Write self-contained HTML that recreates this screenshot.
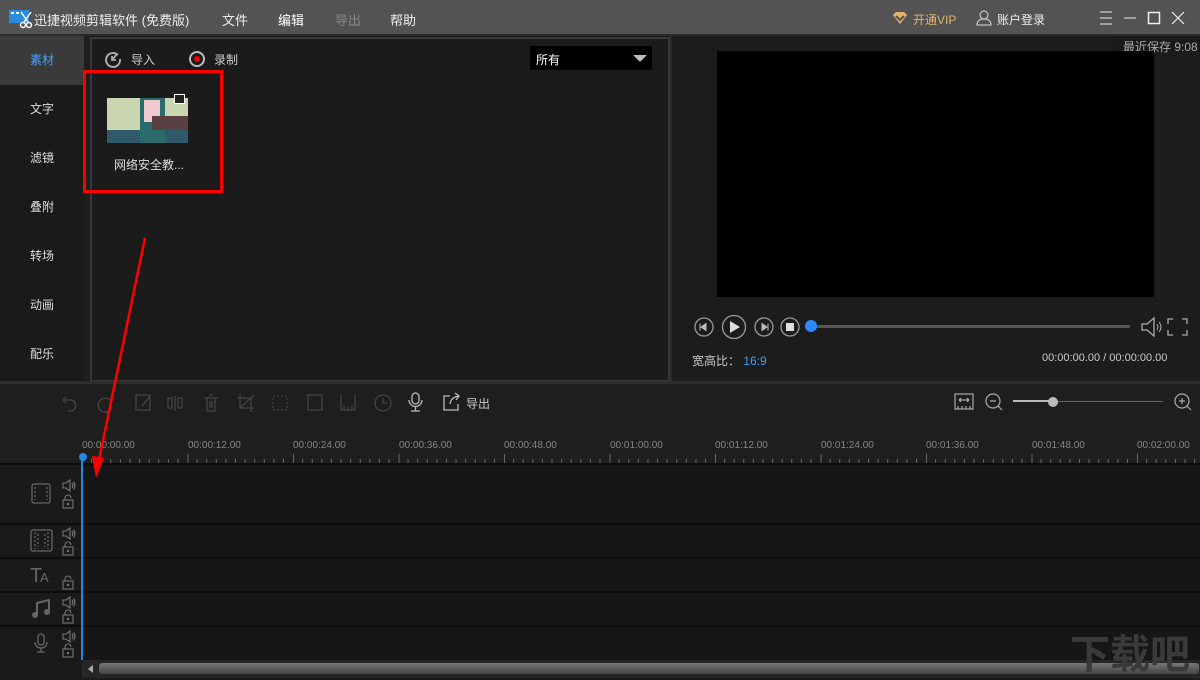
<!DOCTYPE html>
<html><head><meta charset="utf-8"><style>
*{margin:0;padding:0;box-sizing:border-box}
body{width:1200px;height:680px;overflow:hidden;background:#1a1a1a;font-family:"Liberation Sans","Noto Sans CJK SC",sans-serif;font-size:12px;color:#ccc;position:relative}
.a{position:absolute}
.side div{position:absolute;left:0;width:84px;height:49px;line-height:49px;text-align:center;color:#ddd;font-size:12px}
.tick{position:absolute;top:440px;font-size:10px;color:#888}
.row{position:absolute;left:0;width:1200px;border-top:2px solid #0c0c0c;background:#161616}
</style></head><body>
<div class="a" style="left:0;top:0;width:1200px;height:34px;background:#535353"></div>
<div class="a" style="left:0;top:34px;width:1200px;height:2px;background:#2a2a2a"></div>
<svg class="a" style="left:8px;top:9px" width="26" height="20"><rect x="1" y="1" width="20" height="13" fill="#2a8ae0"/><rect x="3" y="3" width="3" height="2" fill="#fff"/><rect x="8" y="3" width="3" height="2" fill="#fff"/><circle cx="15" cy="16" r="2.5" fill="none" stroke="#fff" stroke-width="1.5"/><circle cx="21" cy="16" r="2.5" fill="none" stroke="#fff" stroke-width="1.5"/><path d="M13 3 L20 13 M23 3 L16 13" stroke="#fff" stroke-width="1.5"/></svg>
<div class="a" style="left:34px;top:10px;color:#eee;font-size:13px">迅捷视频剪辑软件 (免费版)</div>
<div class="a" style="left:222px;top:10px;color:#eee;font-size:13px">文件</div>
<div class="a" style="left:278px;top:10px;color:#fff;font-size:13px">编辑</div>
<div class="a" style="left:335px;top:10px;color:#888;font-size:13px">导出</div>
<div class="a" style="left:390px;top:10px;color:#eee;font-size:13px">帮助</div>
<svg class="a" style="left:891px;top:11px" width="18" height="14"><path d="M2 4 L5 1 H13 L16 4 L9 13Z" fill="#e4b36a"/><path d="M5 5 L9 9 L13 5" stroke="#535353" stroke-width="2" fill="none"/></svg>
<div class="a" style="left:913px;top:11px;color:#e4b36a;font-size:12px">开通VIP</div>
<svg class="a" style="left:976px;top:10px" width="16" height="16"><circle cx="8" cy="5" r="4" fill="none" stroke="#ddd"/><path d="M1 15 Q1 9 8 9 Q15 9 15 15Z" fill="none" stroke="#ddd"/></svg>
<div class="a" style="left:997px;top:11px;color:#eee;font-size:12px">账户登录</div>
<svg class="a" style="left:1098px;top:10px" width="100" height="16"><path d="M2 2H14M2 8H14M2 14H14" stroke="#eee"/><path d="M26 8H38" stroke="#eee"/><rect x="50.5" y="2.5" width="11" height="11" fill="none" stroke="#eee" stroke-width="1.5"/><path d="M74 2L86 14M86 2L74 14" stroke="#eee" stroke-width="1.2"/></svg>
<div class="side">
<div style="top:36px;background:#3a3a3a;color:#4aa3ff">素材</div>
<div style="top:85px">文字</div><div style="top:134px">滤镜</div><div style="top:183px">叠附</div><div style="top:232px">转场</div><div style="top:281px">动画</div><div style="top:330px">配乐</div>
</div>
<div class="a" style="left:84px;top:36px;width:6px;height:346px;background:#1e1e1e"></div>
<div class="a" style="left:90px;top:37px;width:580px;height:345px;border:2px solid #383838;background:#1b1b1b"></div>
<svg class="a" style="left:104px;top:50px" width="18" height="18"><path d="M14 5 A7 7 0 1 0 16 9" fill="none" stroke="#aaa" stroke-width="2"/><path d="M13 4 L8 10 M8 6 V10 H12" stroke="#aaa" stroke-width="1.8" fill="none"/></svg>
<div class="a" style="left:131px;top:51px;color:#ccc">导入</div>
<div class="a" style="left:189px;top:51px;width:16px;height:16px;border-radius:50%;border:2px solid #bbb"></div>
<div class="a" style="left:194px;top:56px;width:6px;height:6px;border-radius:50%;background:#e00"></div>
<div class="a" style="left:214px;top:51px;color:#ccc">录制</div>
<div class="a" style="left:530px;top:46px;width:122px;height:24px;background:#000;color:#fff;padding:5px 6px">所有</div>
<div class="a" style="left:633px;top:55px;border-left:7px solid transparent;border-right:7px solid transparent;border-top:7px solid #bbb"></div>
<div class="a" style="left:107px;top:98px;width:81px;height:45px;background:#c9d6b0"></div>
<div class="a" style="left:107px;top:130px;width:81px;height:13px;background:#2f5a6a"></div>
<div class="a" style="left:140px;top:98px;width:25px;height:45px;background:#2a6b6b"></div>
<div class="a" style="left:144px;top:100px;width:16px;height:22px;background:#f0c8d0"></div>
<div class="a" style="left:152px;top:116px;width:36px;height:14px;background:#5a4040"></div>
<div class="a" style="left:174px;top:94px;width:11px;height:10px;border:1px solid #fff;background:#222"></div>
<div class="a" style="left:114px;top:156px;color:#ddd">网络安全教...</div>
<div class="a" style="left:83px;top:70px;width:140px;height:123px;border:3px solid #f00"></div>
<div class="a" style="left:670px;top:36px;width:2px;height:346px;background:#2a2a2a"></div>
<div class="a" style="left:672px;top:36px;width:528px;height:346px;background:#1c1c1c"></div>
<div class="a" style="left:1112px;top:36px;width:88px;height:16px;background:#1a1a1a"></div>
<div class="a" style="left:1123px;top:38px;color:#aaa;font-size:12px">最近保存 9:08</div>
<div class="a" style="left:717px;top:51px;width:437px;height:246px;background:#000"></div>
<svg class="a" style="left:692px;top:314px" width="130" height="26"><g fill="none" stroke="#999" stroke-width="1.3"><circle cx="12" cy="13" r="9"/><circle cx="42" cy="13" r="11.5"/><circle cx="72" cy="13" r="9"/><circle cx="98" cy="13" r="9"/></g><path d="M9 13L14 9.5V16.5Z M8 9.5V16.5" fill="#bbb" stroke="#bbb"/><path d="M38 7L48 13L38 19Z" fill="#ddd"/><path d="M75 13L70 9.5V16.5Z M76 9.5V16.5" fill="#bbb" stroke="#bbb"/><rect x="94" y="9" width="8" height="8" fill="#ddd"/></svg>
<div class="a" style="left:812px;top:325px;width:318px;height:3px;background:#555"></div>
<div class="a" style="left:805px;top:320px;width:12px;height:12px;border-radius:50%;background:#2a8aff"></div>
<svg class="a" style="left:1140px;top:316px" width="50" height="22"><path d="M2 8H7L14 2V20L7 14H2Z" fill="none" stroke="#aaa" stroke-width="1.3"/><path d="M17 8Q19 11 17 14M19 6Q23 11 19 16" stroke="#aaa" fill="none"/><path d="M28 8V3H33M42 3H47V8M47 14V19H42M33 19H28V14" stroke="#aaa" fill="none" stroke-width="1.3"/></svg>
<div class="a" style="left:692px;top:352px;color:#ccc">宽高比： <span style="color:#3a9cff">16:9</span></div>
<div class="a" style="left:1042px;top:352px;color:#ccc;font-size:11px">00:00:00.00 / 00:00:00.00</div>
<div class="a" style="left:0;top:381px;width:1200px;height:3px;background:#2e2e2e"></div>
<div class="a" style="left:0;top:384px;width:1200px;height:79px;background:#1e1e1e"></div>
<svg class="a" style="left:60px;top:390px" width="440" height="26"><g fill="none" stroke="#444" stroke-width="1.3"><path d="M6 7 L3 10 L6 13 M3 10 H12 A6 6 0 0 1 12 21 H8"/><path d="M50 10 A7 7 0 1 0 52 17"/><rect x="76" y="5" width="14" height="15"/><path d="M82 16 L90 6"/><path d="M115 6V21 M108 8V18H112V8Z M118 8V18H122V8Z"/><path d="M144 8H158 M147 8V21H155V8 M149 5H153 M150 11V18M152 11V18"/><path d="M180 4V18H194 M177 8H191V22 M180 18L194 5"/><rect x="213" y="6" width="14" height="14" stroke-dasharray="2 2"/><rect x="248" y="5" width="14" height="15"/><path d="M281 5V20H295V5 M284 20V16M288 20V17M292 20V16"/><circle cx="323" cy="13" r="8"/><path d="M323 8V13H327"/></g><g fill="none" stroke="#bbb" stroke-width="1.3"><rect x="352" y="3" width="7" height="11" rx="3.5"/><path d="M349 10A6.5 6.5 0 0 0 362 10 M355.5 17V21 M351 21H360"/><path d="M390 6H384V20H398V14 M390 14Q391 7 399 6 M395 3L399 6L396 10"/></g></svg>
<div class="a" style="left:466px;top:395px;color:#ccc">导出</div>
<svg class="a" style="left:950px;top:390px" width="245" height="24"><g fill="none" stroke="#aaa" stroke-width="1.2"><rect x="5" y="4" width="18" height="15"/><path d="M9 10H19M9 10L11 8M9 10L11 12M19 10L17 8M19 10L17 12M8 19V16M12 19V16M16 19V16M20 19V16"/><circle cx="43" cy="11" r="7"/><path d="M40 11H46M48 16L52 20"/><circle cx="232" cy="11" r="7"/><path d="M229 11H235M232 8V14M237 16L241 20"/></g></svg>
<div class="a" style="left:1013px;top:400px;width:40px;height:2px;background:#bbb"></div>
<div class="a" style="left:1053px;top:401px;width:110px;height:1px;background:#666"></div>
<div class="a" style="left:1048px;top:397px;width:10px;height:10px;border-radius:50%;background:#bbb"></div>
<div class="tick" style="left:82px">00:00:00.00</div><div class="tick" style="left:188px">00:00:12.00</div><div class="tick" style="left:293px">00:00:24.00</div><div class="tick" style="left:399px">00:00:36.00</div><div class="tick" style="left:504px">00:00:48.00</div><div class="tick" style="left:610px">00:01:00.00</div><div class="tick" style="left:715px">00:01:12.00</div><div class="tick" style="left:821px">00:01:24.00</div><div class="tick" style="left:926px">00:01:36.00</div><div class="tick" style="left:1032px">00:01:48.00</div><div class="tick" style="left:1137px">00:02:00.00</div>
<svg class="a" style="left:82px;top:454px" width="1118" height="10"><defs><pattern id="p" width="105.5" height="10" patternUnits="userSpaceOnUse"><path d="M0.5 9V0M9.6 9V5M19.2 9V5M28.8 9V5M38.4 9V5M48 9V5M57.6 9V5M67.2 9V5M76.8 9V5M86.4 9V5M96 9V5" stroke="#666"/></pattern></defs><rect width="1118" height="10" fill="url(#p)"/><path d="M0 9.5H1118" stroke="#666"/></svg>
<div class="row" style="top:463px;height:60px"></div>
<div class="row" style="top:523px;height:34px"></div>
<div class="row" style="top:557px;height:34px"></div>
<div class="row" style="top:591px;height:34px"></div>
<div class="row" style="top:625px;height:35px"></div>
<div class="a" style="left:0;top:465px;width:81px;height:195px;background:#1a1a1a"></div>
<div class="a" style="left:0;top:523px;width:81px;height:2px;background:#0c0c0c"></div>
<div class="a" style="left:0;top:557px;width:81px;height:2px;background:#0c0c0c"></div>
<div class="a" style="left:0;top:591px;width:81px;height:2px;background:#0c0c0c"></div>
<div class="a" style="left:0;top:625px;width:81px;height:2px;background:#0c0c0c"></div>
<svg class="a" style="left:0;top:0" width="82" height="680"><defs><g id="v"><path d="M0 3H3L7 0V11L3 8H0Z M9 3Q11 5.5 9 8 M10.5 1.5Q13.5 5.5 10.5 9.5" fill="none" stroke="#777" stroke-width="1.1"/></g><g id="l"><rect x="0" y="4" width="10" height="8" fill="none" stroke="#777" stroke-width="1.1"/><path d="M2 4V2A3 3 0 0 1 8 2" fill="none" stroke="#777" stroke-width="1.1"/><circle cx="5" cy="8" r="1.2" fill="#777"/></g></defs>
<use href="#v" x="63" y="480"/><use href="#l" x="63" y="496"/>
<use href="#v" x="63" y="528"/><use href="#l" x="63" y="543"/>
<use href="#l" x="63" y="577"/>
<use href="#v" x="63" y="597"/><use href="#l" x="63" y="611"/>
<use href="#v" x="63" y="631"/><use href="#l" x="63" y="645"/>
<g fill="none" stroke="#666" stroke-width="1.3"><rect x="32" y="484" width="18" height="19" rx="2"/><path d="M35 487V500M47 487V500" stroke-dasharray="2 2"/><rect x="31" y="530" width="21" height="21" rx="2"/><path d="M35 532V549M48 532V549M38 534V547M45 534V547" stroke-dasharray="2 2"/><rect x="38" y="634" width="6" height="11" rx="3"/><path d="M35 642A6 6 0 0 0 47 642M41 648V652M37 652H45"/></g>
<path d="M37 615V603L49 600V612" stroke="#666" stroke-width="2" fill="none"/><circle cx="35" cy="615" r="3" fill="#666"/><circle cx="47" cy="612" r="3" fill="#666"/>
<text x="30" y="582" fill="#666" font-size="20" font-family="Liberation Sans">T</text><text x="40" y="582" fill="#666" font-size="13" font-family="Liberation Sans">A</text></svg>
<div class="a" style="left:81px;top:454px;width:2px;height:206px;background:#1e88e5"></div>
<div class="a" style="left:79px;top:453px;width:8px;height:8px;border-radius:50%;background:#1e88e5"></div>
<div class="a" style="left:0;top:660px;width:1200px;height:20px;background:#1a1a1a"></div>
<div class="a" style="left:82px;top:660px;width:1118px;height:18px;background:#262626"></div>
<div class="a" style="left:99px;top:663px;width:1100px;height:11px;border-radius:3px;background:linear-gradient(#777,#444)"></div>
<div class="a" style="left:88px;top:665px;border-top:4px solid transparent;border-bottom:4px solid transparent;border-right:5px solid #aaa"></div>
<div class="a" style="left:1070px;top:622px;font-size:40px;color:#3a3a3a;font-weight:bold">下载吧</div>
<svg class="a" style="left:0;top:0" width="1200" height="680"><path d="M145 238 L99 460" stroke="#f00" stroke-width="2.5"/><path d="M96 478 L92 456 L104 458Z" fill="#f00"/></svg>
</body></html>
